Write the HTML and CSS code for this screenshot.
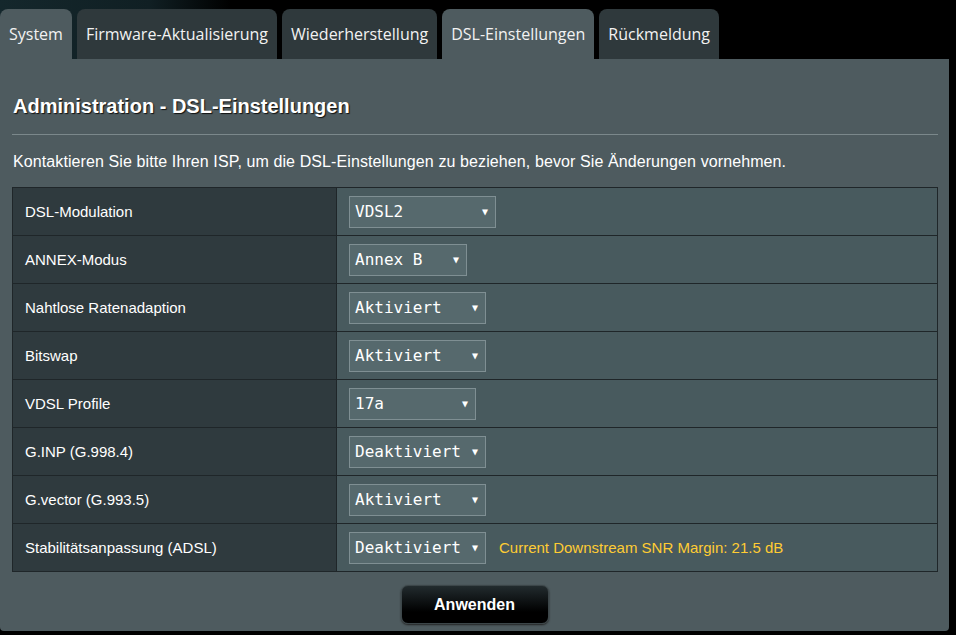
FILE: index.html
```html
<!DOCTYPE html>
<html lang="de">
<head>
    <meta charset="UTF-8">
    <meta name="viewport" content="width=device-width, initial-scale=1.0">
    <title>Administration - DSL-Einstellungen</title>
    <link rel="stylesheet" href="styles.css">
</head>
<body>

<div class="tabs">
    <div class="tab active">System</div>
    <div class="tab">Firmware-Aktualisierung</div>
    <div class="tab">Wiederherstellung</div>
    <div class="tab active">DSL-Einstellungen</div>
    <div class="tab">Rückmeldung</div>
</div>

<div class="panel">
    <h2 class="title">Administration - DSL-Einstellungen</h2>
    <p class="desc">Kontaktieren Sie bitte Ihren ISP, um die DSL-Einstellungen zu beziehen, bevor Sie Änderungen vornehmen.</p>

    <table class="settings">
        <tr>
            <th>DSL-Modulation</th>
            <td><span class="select w147">VDSL2<i>▼</i></span></td>
        </tr>
        <tr>
            <th>ANNEX-Modus</th>
            <td><span class="select w118">Annex B<i>▼</i></span></td>
        </tr>
        <tr>
            <th>Nahtlose Ratenadaption</th>
            <td><span class="select w137">Aktiviert<i>▼</i></span></td>
        </tr>
        <tr>
            <th>Bitswap</th>
            <td><span class="select w137">Aktiviert<i>▼</i></span></td>
        </tr>
        <tr>
            <th>VDSL Profile</th>
            <td><span class="select w127">17a<i>▼</i></span></td>
        </tr>
        <tr>
            <th>G.INP (G.998.4)</th>
            <td><span class="select w137">Deaktiviert<i>▼</i></span></td>
        </tr>
        <tr>
            <th>G.vector (G.993.5)</th>
            <td><span class="select w137">Aktiviert<i>▼</i></span></td>
        </tr>
        <tr>
            <th>Stabilitätsanpassung (ADSL)</th>
            <td><span class="select w137">Deaktiviert<i>▼</i></span><span class="snr">Current Downstream SNR Margin: 21.5 dB</span></td>
        </tr>
    </table>

    <div class="actions">
        <button class="apply">Anwenden</button>
    </div>
</div>

</body>
</html>
```

FILE: styles.css
```css
body {
    margin: 0;
    background: #000 linear-gradient(90deg, #14272c 0, #101f23 150px, #000 230px) no-repeat;
    background-size: 100% 59px;
    font-family: "Liberation Sans", Arial, sans-serif;
    color: #fff;
    width: 956px;
    height: 635px;
    overflow: hidden;
}
.tabs {
    display: flex;
    gap: 5px;
    padding-top: 9px;
    height: 50px;
}
.tab {
    background: #2f393c;
    border-radius: 8px 8px 0 0;
    padding: 0 9px;
    font-family: "Open Sans", "Noto Sans", sans-serif;
    font-size: 16px;
    line-height: 50px;
    color: #f2f2f2;
}
.tab.active {
    background: #4e5b5f;
}
.panel {
    background: #4e5b5f;
    width: 949px;
    height: 572px;
    border-radius: 0 0 4px 4px;
    padding: 0 12px 0 12px;
    box-sizing: border-box;
}
.title {
    margin: 0;
    padding: 36px 0 16px 1px;
    font-size: 20px;
    font-weight: bold;
    text-shadow: 1px 1px 1px #111;
    border-bottom: 1px solid #7b888b;
    margin-right: -1px;
}
.desc {
    margin: 0;
    padding: 17px 0 15px 1px;
    font-size: 16px;
    line-height: 20px;
    letter-spacing: 0.1px;
}
.settings {
    border-collapse: collapse;
    width: 926px;
}
.settings th,
.settings td {
    border: 1px solid #1f2629;
    height: 47px;
    padding: 0;
    font-size: 15px;
}
.settings th {
    width: 311px;
    background: #2f3a3e;
    text-align: left;
    font-weight: normal;
    padding-left: 12px;
}
.settings td {
    background: #485a5e;
    padding-left: 12px;
}
.select {
    display: inline-flex;
    align-items: center;
    justify-content: space-between;
    vertical-align: middle;
    box-sizing: border-box;
    height: 32px;
    padding: 0 7px 0 5px;
    border: 1px solid #7f8f93;
    background: #56696d;
    font-family: "DejaVu Sans Mono", monospace;
    font-size: 16px;
    color: #fff;
    white-space: pre;
}
.select i {
    font-style: normal;
    font-size: 10px;
}
.w147 { width: 147px; }
.w118 { width: 118px; }
.w137 { width: 137px; }
.w127 { width: 127px; }
.snr {
    color: #ffcc33;
    margin-left: 13px;
    vertical-align: middle;
}
.actions {
    display: flex;
    justify-content: center;
    padding-top: 13px;
}
.apply {
    width: 148px;
    height: 39px;
    border: 1px solid #3c4649;
    border-radius: 7px;
    background: linear-gradient(#222b2e, #000 70%);
    color: #fff;
    font-family: "Liberation Sans", Arial, sans-serif;
    font-size: 16px;
    font-weight: bold;
    box-shadow: 0 1px 2px #222;
}
```
